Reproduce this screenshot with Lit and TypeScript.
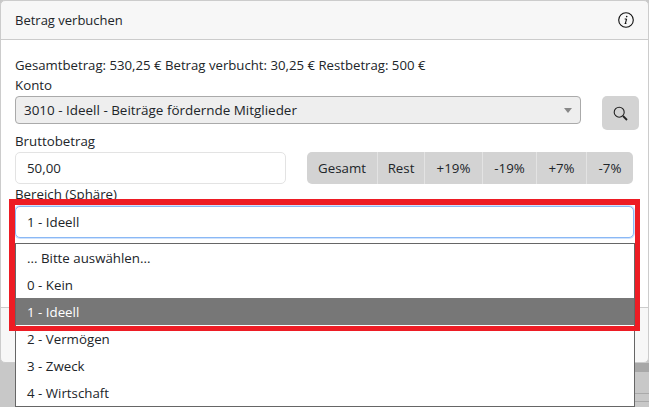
import { css, html, LitElement } from 'lit';
import { customElement } from 'lit/decorators.js';

const QUICK = ['Gesamt', 'Rest', '+19%', '-19%', '+7%', '-7%'];
const OPTIONS = ['... Bitte auswählen...', '0 - Kein', '1 - Ideell', '2 - Vermögen', '3 - Zweck', '4 - Wirtschaft'];
const SELECTED = '1 - Ideell';

@customElement('app-root')
export class AppRoot extends LitElement {
  static styles = css`
    :host {
      display: block;
      position: relative;
      width: 649px;
      height: 407px;
      overflow: hidden;
      background: #c8c8c8;
      font-family: 'Open Sans', 'Noto Sans', sans-serif;
      font-size: 13.3px;
      line-height: 19px;
      color: #212529;
    }
    .modal {
      box-sizing: border-box;
      height: 363px;
      background: #f7f7f7;
      border: 1px solid #ccc;
      border-radius: 5px;
    }
    .header {
      box-sizing: border-box;
      height: 39px;
      padding: 0 14px;
      display: flex;
      align-items: center;
      justify-content: space-between;
      border-bottom: 1px solid #ccc;
      font-size: 13px;
    }
    .body {
      box-sizing: border-box;
      height: 268px;
      padding: 16px 14px 0;
      background: #fff;
      border-bottom: 1px solid #ccc;
    }
    .summary {
      height: 19px;
      font-size: 13.2px;
    }
    .label {
      box-sizing: border-box;
      height: 20px;
      padding-top: 1px;
    }
    .label.amount {
      margin-top: 2px;
      padding-top: 0;
    }
    .label.area {
      height: 21px;
      margin-top: 1px;
      padding-top: 0;
    }
    .row {
      display: flex;
    }
    .select {
      box-sizing: border-box;
      flex: none;
      width: 566px;
      height: 28px;
      margin-top: 1px;
      padding: 1px 8px 0;
      display: flex;
      align-items: center;
      justify-content: space-between;
      background: #eee;
      border: 1px solid #aaa;
      border-radius: 4px;
      font-size: 13.45px;
    }
    .caret {
      width: 0;
      height: 0;
      border-left: 4px solid transparent;
      border-right: 4px solid transparent;
      border-top: 5px solid #888;
    }
    .search {
      box-sizing: border-box;
      flex: none;
      width: 37px;
      height: 34px;
      margin-top: 1px;
      margin-left: 21px;
      display: flex;
      align-items: center;
      justify-content: center;
      background: #d3d3d3;
      border-radius: 5px;
    }
    .input {
      box-sizing: border-box;
      flex: none;
      width: 271px;
      height: 32px;
      padding: 0 11px;
      display: flex;
      align-items: center;
      background: #fff;
      border: 1px solid #e3e3e3;
      border-radius: 5px;
    }
    .quick {
      display: grid;
      grid-template-columns: 70px 47px 58px 54px 50px 47px;
      flex: none;
      height: 32px;
      margin-left: 21px;
      background: #d3d3d3;
      border-radius: 5px;
    }
    .quick span {
      display: flex;
      align-items: center;
      justify-content: center;
      border-left: 1px solid #e3e3e3;
    }
    .quick span:first-child {
      border-left: 0;
    }
    .focused {
      box-sizing: border-box;
      width: 619px;
      height: 32px;
      padding: 0 11px;
      display: flex;
      align-items: center;
      background: #fff;
      border: 1px solid #8ab8f5;
      border-radius: 5px;
      box-shadow: 0 0 0 1px #cfe2fc;
    }
    .backdrop {
      padding-left: 634px;
    }
    .band {
      height: 9px;
      background: #a8a8a8;
    }
    .line {
      height: 1px;
      margin-top: 21px;
      background: #aaa;
    }
    .line + .line {
      margin-top: 7px;
    }
    .list {
      position: absolute;
      left: 15px;
      top: 243px;
      box-sizing: border-box;
      width: 620px;
      height: 164px;
      background: #fff;
      border: 1px solid #666;
    }
    .option {
      box-sizing: border-box;
      height: 27px;
      padding: 1px 11px 0;
      display: flex;
      align-items: center;
    }
    .option.active {
      background: #777;
      color: #fff;
    }
    .highlight {
      position: absolute;
      left: 9px;
      top: 199px;
      box-sizing: border-box;
      width: 631px;
      height: 132px;
      border: solid #ed1c24;
      border-width: 6px 5px 5px 6px;
    }
    svg {
      display: block;
    }
  `;

  render() {
    return html`
      <div class="modal">
        <div class="header">
          <span>Betrag verbuchen</span>
          <svg width="16" height="16" viewBox="0 0 16 16" fill="none" stroke="#111">
            <circle cx="8" cy="8" r="7.3" stroke-width="1.1" />
            <path d="M8.6 6.8 7.4 11.4M6.7 7h1.9M6.6 11.5h1.8" stroke-width="1.1" />
            <circle cx="8.7" cy="4.6" r=".8" fill="#111" stroke="none" />
          </svg>
        </div>
        <div class="body">
          <div class="summary">Gesamtbetrag: 530,25 € Betrag verbucht: 30,25 € Restbetrag: 500 €</div>
          <div class="label">Konto</div>
          <div class="row">
            <div class="select">
              <span>3010 - Ideell - Beiträge fördernde Mitglieder</span>
              <i class="caret"></i>
            </div>
            <div class="search">
              <svg width="15" height="15" viewBox="0 0 15 15" fill="none" stroke="#222">
                <circle cx="6.2" cy="6.2" r="5" stroke-width="1.1" />
                <path d="M10 10l4 4" stroke-width="1.8" />
              </svg>
            </div>
          </div>
          <div class="label amount">Bruttobetrag</div>
          <div class="row">
            <div class="input">50,00</div>
            <div class="quick">${QUICK.map((q) => html`<span>${q}</span>`)}</div>
          </div>
          <div class="label area">Bereich (Sphäre)</div>
          <div class="focused">${SELECTED}</div>
        </div>
      </div>
      <div class="backdrop">
        <div class="band"></div>
        <div class="line"></div>
        <div class="line"></div>
      </div>
      <div class="list">
        ${OPTIONS.map((o) => html`<div class="option ${o === SELECTED ? 'active' : ''}">${o}</div>`)}
      </div>
      <div class="highlight"></div>
    `;
  }
}
